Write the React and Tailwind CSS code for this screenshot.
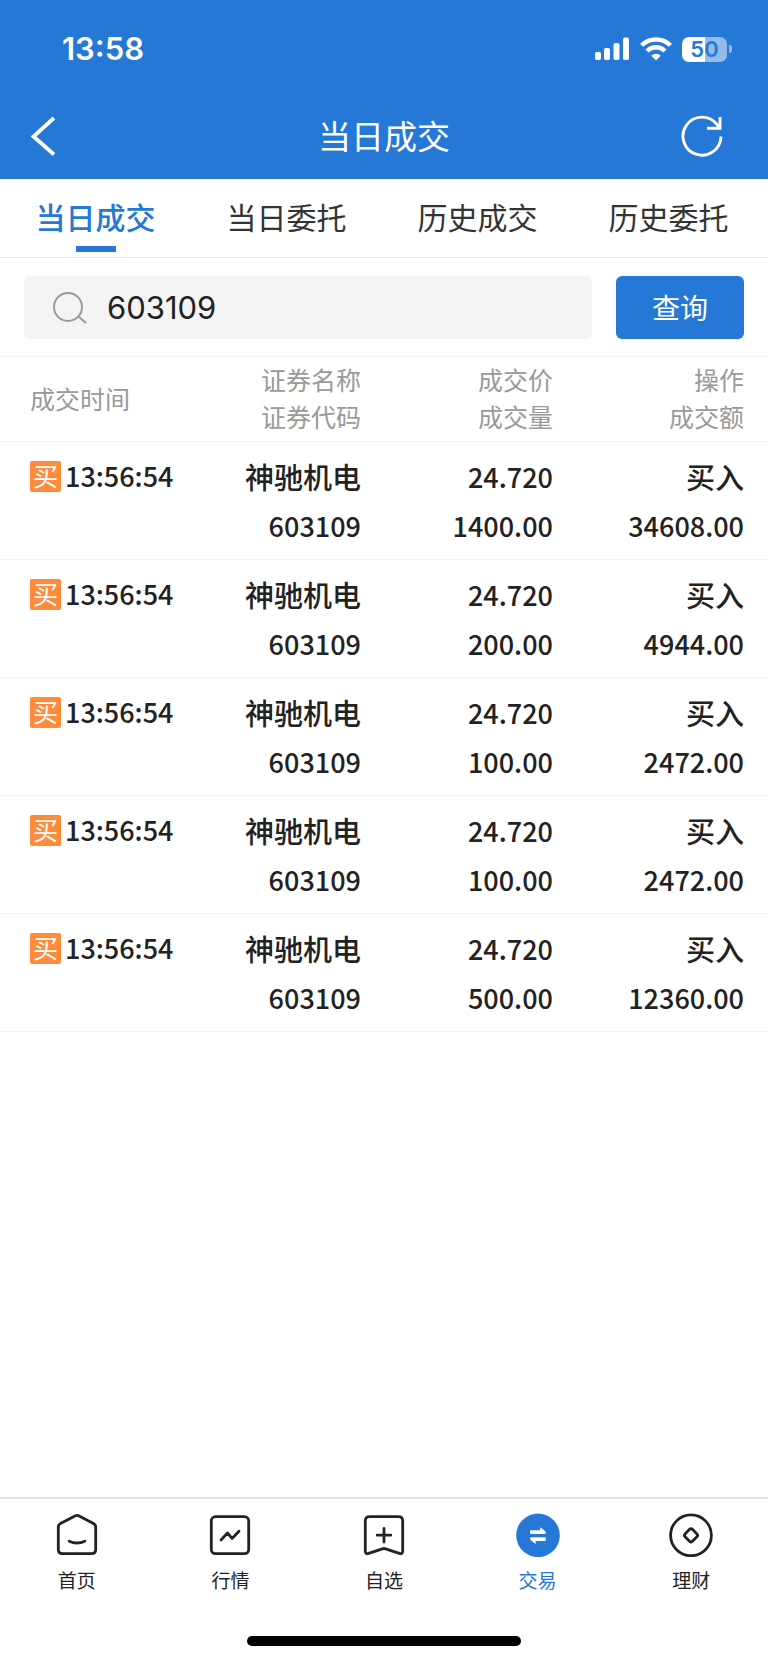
import { useState } from 'react';

const TABS = ['当日成交', '当日委托', '历史成交', '历史委托'];

const DEALS = [
  { id: 1, time: '13:56:54', name: '神驰机电', code: '603109', price: '24.720', volume: '1400.00', amount: '34608.00' },
  { id: 2, time: '13:56:54', name: '神驰机电', code: '603109', price: '24.720', volume: '200.00', amount: '4944.00' },
  { id: 3, time: '13:56:54', name: '神驰机电', code: '603109', price: '24.720', volume: '100.00', amount: '2472.00' },
  { id: 4, time: '13:56:54', name: '神驰机电', code: '603109', price: '24.720', volume: '100.00', amount: '2472.00' },
  { id: 5, time: '13:56:54', name: '神驰机电', code: '603109', price: '24.720', volume: '500.00', amount: '12360.00' },
];

const HomeIcon = () => (
  <svg className="size-11" viewBox="0 0 44 44" fill="none" stroke="currentColor" strokeWidth="2.8" strokeLinecap="round" strokeLinejoin="round">
    <path d="M20.4 2.8 5.5 10.4Q3.3 11.6 3.3 14V36.5Q3.3 40.7 7.5 40.7H36.5Q40.7 40.7 40.7 36.5V14Q40.7 11.6 38.5 10.4L23.6 2.8Q22 2 20.4 2.8Z" />
    <path d="M14.2 28.2Q22 31.8 29.8 28.2" />
  </svg>
);

const QuoteIcon = () => (
  <svg className="size-11" viewBox="0 0 44 44" fill="none" stroke="currentColor" strokeWidth="2.8" strokeLinecap="round" strokeLinejoin="round">
    <rect x="3.3" y="3.7" width="37.4" height="37" rx="4.2" />
    <path d="M13 27 19.5 20 24 25.4 31 18.3" />
  </svg>
);

const FavoriteIcon = () => (
  <svg className="size-11" viewBox="0 0 44 44" fill="none" stroke="currentColor" strokeWidth="2.8" strokeLinecap="round" strokeLinejoin="round">
    <path d="M7.5 3.7H36.5Q40.7 3.7 40.7 7.9V38Q40.7 41.4 37.4 40.4L22 35.3 6.6 40.4Q3.3 41.4 3.3 38V7.9Q3.3 3.7 7.5 3.7Z" />
    <path d="M22 15.5V29M15.2 22.2H28.8" />
  </svg>
);

const TradeIcon = () => (
  <svg className="size-11" viewBox="0 0 44 44">
    <circle cx="22" cy="22.3" r="21.8" fill="currentColor" />
    <path d="M14.8 17.2H24.2V15Q24.2 14.1 25 14.7L29.3 18.3Q29.8 18.8 29.8 19.4V20.2Q29.8 20.9 29.1 20.9H14.8Q14.1 20.9 14.1 20.2V17.9Q14.1 17.2 14.8 17.2Z" fill="#fff" />
    <path d="M29.1 28H19.7V30.2Q19.7 31.1 18.9 30.5L14.6 26.9Q14.1 26.4 14.1 25.8V25Q14.1 24.3 14.8 24.3H29.1Q29.8 24.3 29.8 25V27.3Q29.8 28 29.1 28Z" fill="#fff" />
  </svg>
);

const WealthIcon = () => (
  <svg className="size-11" viewBox="0 0 44 44" fill="none" stroke="currentColor" strokeWidth="2.8">
    <circle cx="22" cy="22.3" r="20.4" />
    <rect x="16.8" y="17.1" width="10.4" height="10.4" rx="2" transform="rotate(45 22 22.3)" />
  </svg>
);

const NAV = [
  { label: '首页', Icon: HomeIcon },
  { label: '行情', Icon: QuoteIcon },
  { label: '自选', Icon: FavoriteIcon },
  { label: '交易', Icon: TradeIcon },
  { label: '理财', Icon: WealthIcon },
];

const StatusBar = () => (
  <div className="flex h-24 items-center justify-between pt-0.5 pr-9 pl-[62px]">
    <span className="font-[Inter,sans-serif] text-[31px] leading-10 font-semibold">13:58</span>
    <div className="flex items-center gap-2.5">
      <svg className="h-6 w-9" viewBox="0 0 36 24" fill="currentColor">
        <rect x="1" y="15" width="6" height="8" rx="1.8" />
        <rect x="10" y="11" width="6" height="12" rx="1.8" />
        <rect x="19.5" y="6" width="6" height="17" rx="1.8" />
        <rect x="29" y="0.5" width="6" height="22.5" rx="1.8" />
      </svg>
      <svg className="h-6 w-8" viewBox="0 0 32 24" fill="none" stroke="currentColor" strokeWidth="4.4">
        <path d="M1.6 8.3A20.6 20.6 0 0 1 30.4 8.3" />
        <path d="M7 14A12.8 12.8 0 0 1 25 14" />
        <path d="M16 23.6 11.2 18.8A6.8 6.8 0 0 1 20.8 18.8Z" fill="currentColor" stroke="none" />
      </svg>
      <div className="flex items-center gap-0.5">
        <div className="flex h-[25px] w-[45px] items-center justify-center rounded-[7px] bg-linear-to-r from-white from-50% to-white/50 to-50% font-[Inter,sans-serif] text-[22px] leading-none font-semibold text-[#2578d5]">50</div>
        <div className="h-2 w-[3px] rounded-r-full bg-white/50" />
      </div>
    </div>
  </div>
);

const Cell = ({ top, bottom, topClass }) => (
  <td className="pt-2.5 pb-[9px] text-right align-top last:pr-6">
    <div className={`leading-[49px] ${topClass || ''}`}>{top}</div>
    <div className="leading-[49px]">{bottom}</div>
  </td>
);

const App = () => {
  const [tab, setTab] = useState('当日成交');
  const [active, setActive] = useState('交易');
  const [code, setCode] = useState('603109');

  return (
    <div className="flex min-h-screen flex-col bg-white font-['Noto_Sans_CJK_SC',sans-serif] text-[#222]">
      <header className="bg-[#2578d5] text-white">
        <StatusBar />
        <div className="flex h-[83px] items-center justify-between pr-10 pb-1 pl-7">
          <button type="button" aria-label="返回" className="w-15">
            <svg className="h-10 w-7" viewBox="0 0 28 40" fill="none" stroke="currentColor" strokeWidth="3.8">
              <path d="M26 2 5.5 20.5 26 38.5" />
            </svg>
          </button>
          <h1 className="pb-0.5 text-[33px] leading-10">当日成交</h1>
          <button type="button" aria-label="刷新" className="w-12">
            <svg className="h-11 w-12" viewBox="0 0 48 44" fill="none" stroke="currentColor" strokeWidth="2.9">
              <path d="M41 22.5A19 19 0 1 1 37 10.5L40 14" />
              <path d="M40 3V14.3H27" />
            </svg>
          </button>
        </div>
      </header>

      <nav className="grid grid-cols-4 border-b border-[#ebebeb] pr-1">
        {TABS.map(t => (
          <button
            key={t}
            type="button"
            onClick={() => setTab(t)}
            className={`flex h-[78px] flex-col items-center pt-3.5 text-[30px] leading-[46px] ${tab === t ? 'font-medium text-[#2578d5]' : 'text-[#333]'}`}
          >
            {t}
            {tab === t && <span className="mt-[7px] h-1.5 w-10 bg-[#2578d5]" />}
          </button>
        ))}
      </nav>

      <form className="flex gap-6 px-6 pt-[18px] pb-[17px]" onSubmit={e => e.preventDefault()}>
        <label className="flex h-[63px] min-w-0 flex-1 items-center gap-[19px] rounded-md bg-[#f4f4f4] pl-7">
          <svg className="size-9 shrink-0" viewBox="0 0 36 36" fill="none" stroke="#999" strokeWidth="2">
            <circle cx="16" cy="17" r="14" />
            <path d="M26.5 26.5 34 33" />
          </svg>
          <input
            aria-label="证券代码"
            value={code}
            onChange={e => setCode(e.target.value)}
            className="min-w-0 flex-1 bg-transparent font-[Inter,sans-serif] text-[31px] leading-10 outline-none"
          />
        </label>
        <button type="submit" className="w-32 rounded-md bg-[#2578d5] pb-0.5 text-[28px] leading-10 text-white">查询</button>
      </form>

      <main className="flex-1">
        <table className="w-full table-fixed border-collapse">
          <colgroup>
            <col className="w-[22%]" />
            <col className="w-[25%]" />
            <col className="w-[25%]" />
            <col className="w-[28%]" />
          </colgroup>
          <thead>
            <tr className="border-y border-[#f5f5f5] text-right text-[25px] leading-[37px] text-[#999]">
              <th className="pt-1 pb-1.5 pl-[30px] text-left font-normal">成交时间</th>
              <th className="pt-1 pb-1.5 font-normal">证券名称<br />证券代码</th>
              <th className="pt-1 pb-1.5 font-normal">成交价<br />成交量</th>
              <th className="pt-1 pr-6 pb-1.5 font-normal">操作<br />成交额</th>
            </tr>
          </thead>
          <tbody>
            {DEALS.map(d => (
              <tr key={d.id} className="border-b border-[#f5f5f5] text-[27px] font-medium whitespace-nowrap">
                <td className="pt-2.5 pl-[30px] align-top">
                  <div className="flex h-[49px] items-center gap-1">
                    <span className="size-[31px] shrink-0 rounded-xs bg-[#ff8a3a] text-center text-[25px] leading-[29px] font-normal text-white">买</span>
                    <span>{d.time}</span>
                  </div>
                </td>
                <Cell top={d.name} topClass="text-[29px]" bottom={d.code} />
                <Cell top={d.price} bottom={d.volume} />
                <Cell top="买入" topClass="text-[29px]" bottom={d.amount} />
              </tr>
            ))}
          </tbody>
        </table>
      </main>

      <footer className="border-t-2 border-[#e2e2e2]">
        <nav className="grid grid-cols-5 pt-3.5">
          {NAV.map(({ label, Icon }) => (
            <button
              key={label}
              type="button"
              onClick={() => setActive(label)}
              className={`flex flex-col items-center gap-[9px] text-[19px] leading-7 ${active === label ? 'text-[#2578d5]' : 'text-[#222]'}`}
            >
              <Icon />
              {label}
            </button>
          ))}
        </nav>
        <div className="mx-auto mt-[42px] mb-[17px] h-2.5 w-[274px] rounded-full bg-black" />
      </footer>
    </div>
  );
};

export default App;
